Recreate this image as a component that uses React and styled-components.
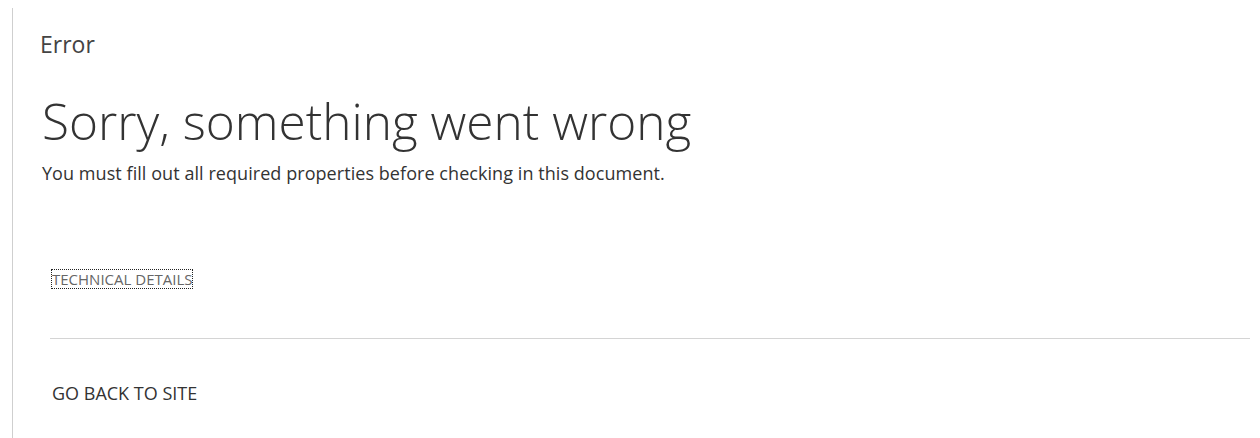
import React from 'react';
import styled, {createGlobalStyle} from 'styled-components'

const GlobalStyle = createGlobalStyle`
  html, body {
    margin: 0;
    padding: 0;
    background: #fff;
  }
  body {
    font-family: "Open Sans", "Noto Sans", "Liberation Sans", sans-serif;
    color: #333;
  }
`

const Page = styled.div`
  height: 438px;
  padding: 8px 10px 0 12px;
  box-sizing: border-box;
  overflow: hidden;
`

const Frame = styled.div`
  height: 100%;
  border-left: 1px solid #cfcfcf;
  padding: 22px 0 0 27px;
  box-sizing: border-box;
`

const Title = styled.div`
  font-size: 23px;
  font-weight: 400;
  color: #444;
  line-height: 28px;
`

const Content = styled.div`
  padding-left: 2px;
  margin-top: 33px;
`

const Heading = styled.h1`
  margin: 0;
  font-size: 49.5px;
  font-weight: 300;
  color: #333;
  line-height: 60px;
`

const Message = styled.p`
  margin: 10px 0 0;
  font-size: 18px;
  letter-spacing: 0.06px;
  color: #333;
  line-height: 24px;
`

const Details = styled.a`
  display: inline-block;
  margin: 85px 0 0 10px;
  font-size: 15px;
  color: #666;
  text-transform: uppercase;
  text-decoration: none;
  line-height: 18px;
  outline: 1px dotted #222;
  outline-offset: 0;
`

const Divider = styled.hr`
  margin: 48px 0 0 8px;
  border: 0;
  border-top: 1px solid #d4d4d4;
`

const BackLink = styled.a`
  display: inline-block;
  margin: 43px 0 0 10px;
  font-size: 18px;
  color: #333;
  text-transform: uppercase;
  text-decoration: none;
  line-height: 22px;
`

const ErrorPage = () => {
    return (
        <Page>
            <Frame>
                <Title>Error</Title>
                <Content>
                    <Heading>Sorry, something went wrong</Heading>
                    <Message>You must fill out all required properties before checking in this document.</Message>
                    <Details href="#">Technical Details</Details>
                    <Divider/>
                    <BackLink href="#">Go back to site</BackLink>
                </Content>
            </Frame>
        </Page>
    )
}

const App = () => (
    <>
        <GlobalStyle/>
        <ErrorPage/>
    </>
)

export default App
